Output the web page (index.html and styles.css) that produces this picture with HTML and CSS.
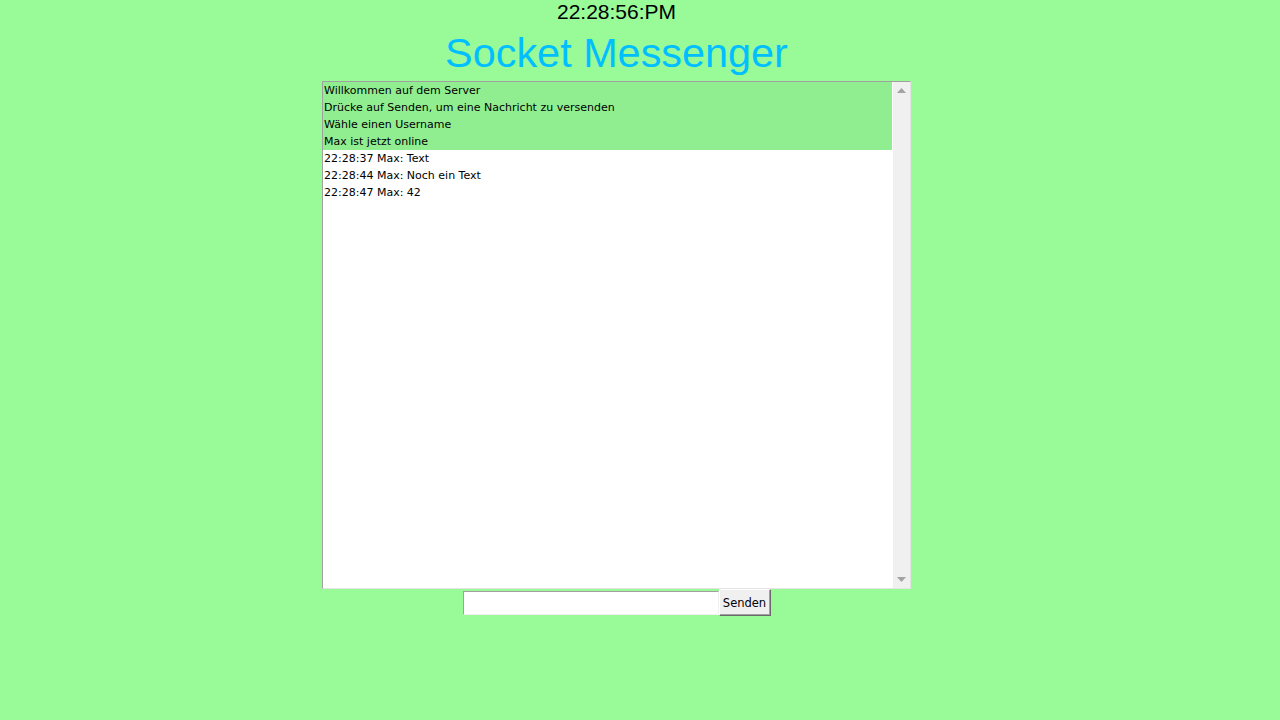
FILE: index.html
```html
<!DOCTYPE html>
<html>
<head>
<meta charset="utf-8">
<link rel="stylesheet" href="styles.css">
</head>
<body>
<div class="page">
  <div class="clock">22:28:56:PM</div>
  <h1 class="title">Socket Messenger</h1>
  <div class="chat">
    <div class="messages">
      <div class="msg sys">Willkommen auf dem Server</div>
      <div class="msg sys">Drücke auf Senden, um eine Nachricht zu versenden</div>
      <div class="msg sys">Wähle einen Username</div>
      <div class="msg sys">Max ist jetzt online</div>
      <div class="msg">22:28:37 Max: Text</div>
      <div class="msg">22:28:44 Max: Noch ein Text</div>
      <div class="msg">22:28:47 Max: 42</div>
    </div>
    <div class="scrollbar">
      <svg class="arrow" width="17" height="17" viewBox="0 0 17 17"><path d="M4 11 L8.5 6 L13 11 Z" fill="#a3a3a3"/></svg>
      <div class="track"></div>
      <svg class="arrow" width="17" height="17" viewBox="0 0 17 17"><path d="M4 6 L8.5 11 L13 6 Z" fill="#a3a3a3"/></svg>
    </div>
  </div>
  <div class="form">
    <input class="input" type="text">
    <button class="send">Senden</button>
  </div>
</div>
</body>
</html>
```
FILE: styles.css
```css
html, body {
  margin: 0;
  padding: 0;
  background: #98fb98;
}
.page {
  width: 1233px;
  display: flex;
  flex-direction: column;
  align-items: center;
}
.clock {
  font-family: "Liberation Sans", Arial, sans-serif;
  font-size: 21px;
  line-height: 24px;
  color: #000;
}
.title {
  margin: 0;
  font-family: "Liberation Sans", Arial, sans-serif;
  font-weight: normal;
  font-size: 41.4px;
  line-height: 57px;
  padding-top: 1px;
  height: 57px;
  box-sizing: border-box;
  color: #00bfff;
}
.chat {
  width: 589px;
  height: 508px;
  box-sizing: border-box;
  display: flex;
  background: #fff;
  border-top: 1px solid #a0a0a0;
  border-left: 1px solid #a0a0a0;
  border-right: 1px solid #e3e3e3;
  border-bottom: 1px solid #e3e3e3;
}
.messages {
  flex: 1;
  font-family: "DejaVu Sans", Tahoma, sans-serif;
  font-size: 11px;
  line-height: 17px;
  color: #000;
}
.msg {
  padding-left: 1px;
  height: 17px;
}
.msg.sys {
  background: #90ee90;
}
.scrollbar {
  width: 17px;
  margin-left: 1px;
  background: #f0f0f0;
  display: flex;
  flex-direction: column;
}
.track {
  flex: 1;
}
.arrow {
  display: block;
}
.form {
  display: flex;
  align-items: center;
  height: 27px;
}
.input {
  width: 256px;
  height: 24px;
  box-sizing: border-box;
  margin: 0;
  border-top: 1px solid #a0a0a0;
  border-left: 1px solid #a0a0a0;
  border-right: 1px solid #f0f0f0;
  border-bottom: 1px solid #f0f0f0;
  background: #fff;
  padding: 0;
}
.send {
  width: 52px;
  height: 27px;
  box-sizing: border-box;
  margin: 0;
  padding: 0;
  font-family: "DejaVu Sans", Tahoma, sans-serif;
  font-size: 11.5px;
  color: #000;
  background: #f0f0f0;
  border-top: 1px solid #fff;
  border-left: 1px solid #fff;
  border-right: 1px solid #696969;
  border-bottom: 1px solid #696969;
  box-shadow: inset -1px -1px 0 #a0a0a0;
}
```
